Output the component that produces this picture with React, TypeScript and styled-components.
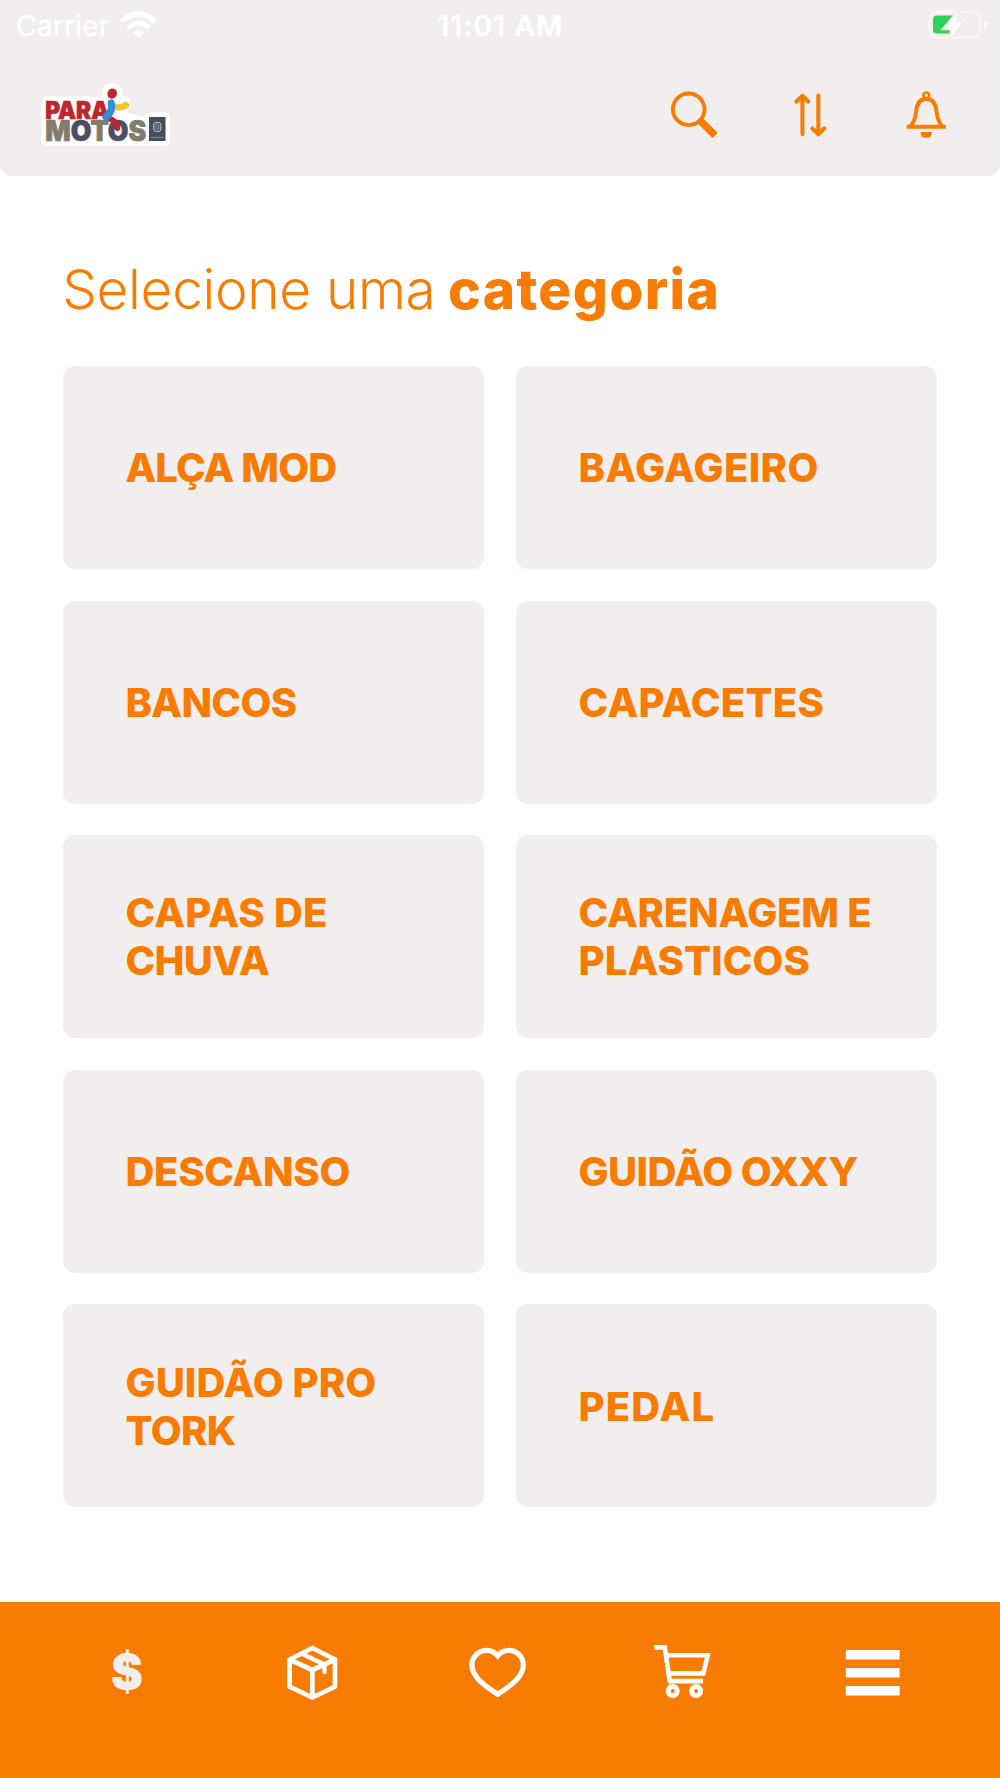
import React from "react";
import styled, { createGlobalStyle } from "styled-components";

const ORANGE = "#f87c02";
const PANEL = "#f2eeee";

const GlobalStyle = createGlobalStyle`
  * { box-sizing: border-box; }
  body { margin: 0; background: #fff; font-family: Inter, Roboto, sans-serif; }
`;

const Screen = styled.div`
  width: 1000px;
  height: 1778px;
  display: flex;
  flex-direction: column;
  background: #fff;
  overflow: hidden;
`;

const Header = styled.header`
  height: 176px;
  flex: none;
  background: ${PANEL};
  border-radius: 0 0 12px 12px;
`;

const StatusBar = styled.div`
  height: 50px;
  padding: 0 13.5px 0 16px;
  display: grid;
  grid-template-columns: 1fr auto 1fr;
  align-items: center;
  color: #fff;
`;

const Carrier = styled.div`
  display: flex;
  align-items: center;
  gap: 11px;
  font-size: 28.5px;
  line-height: 50px;
`;

const StatusText = styled.span`
  padding-top: 2px;
  line-height: 48px;
`;

const Clock = styled.div`
  padding: 2px 2px 0 0;
  font-size: 28.5px;
  font-weight: 600;
  line-height: 48px;
  letter-spacing: 0.95px;
`;

const Battery = styled.div`
  display: flex;
  justify-content: flex-end;
  margin-right: -1.5px;
`;

const NavRow = styled.div`
  height: 74px;
  padding: 0 49px 0 36px;
  margin-top: 26px;
  display: flex;
  justify-content: space-between;
`;

const Actions = styled.div`
  display: flex;
  gap: 66px;
  padding-top: 12px;
`;

const Icon = styled.svg`
  display: block;
  flex: none;
`;

const Main = styled.main`
  height: 1426.4px;
  flex: none;
  padding: 81px 62.7px 0 62.7px;
`;

const Title = styled.h1`
  margin: 0 0 0 -0.5px;
  height: 64px;
  font-size: 55px;
  line-height: 64px;
  font-weight: 300;
  color: ${ORANGE};
  display: flex;
  gap: 12.5px;
  white-space: nowrap;
`;

const TitleWord = styled.span<{ $weight: number; $track: number }>`
  font-weight: ${(p) => p.$weight};
  letter-spacing: ${(p) => p.$track}px;
`;

const Grid = styled.div`
  margin-top: 45px;
  display: grid;
  grid-template-columns: 1fr 1fr;
  grid-auto-rows: 203px;
  gap: 31.6px 31.6px;
`;

const Card = styled.div`
  background: ${PANEL};
  border-radius: 12px;
  padding: 1.5px 0 0 62.8px;
  display: flex;
  flex-direction: column;
  justify-content: center;
`;

const Line = styled.span<{ $track: number }>`
  font-size: 40px;
  line-height: 48px;
  font-weight: 800;
  color: ${ORANGE};
  white-space: nowrap;
  letter-spacing: ${(p) => p.$track}px;
`;

const TabBar = styled.nav`
  height: 175.6px;
  flex: none;
  background: ${ORANGE};
  padding: 39.6px 0 0 97px;
  display: flex;
`;

const Tab = styled.div<{ $width: number }>`
  width: ${(p) => p.$width}px;
  height: 60px;
`;

const Dollar = styled.div`
  width: 60px;
  text-align: center;
  font-size: 48px;
  font-weight: 900;
  line-height: 60px;
  color: ${PANEL};
`;

type Label = [string, number];
const categories: Label[][] = [
  [["ALÇA MOD", -0.9]],
  [["BAGAGEIRO", 0.4]],
  [["BANCOS", -0.7]],
  [["CAPACETES", 0.3]],
  [["CAPAS DE", 0.25], ["CHUVA", -0.7]],
  [["CARENAGEM E", -0.2], ["PLASTICOS", 0.1]],
  [["DESCANSO", -0.3]],
  [["GUIDÃO OXXY", -0.6]],
  [["GUIDÃO PRO", 0.1], ["TORK", -0.6]],
  [["PEDAL", 1.15]],
];

function Logo() {
  return (
    <Icon width="140" height="78" viewBox="36 76 140 78" fontFamily="Inter, sans-serif" fontWeight="900">
      <path
        d="M46 101H102L107 98C105 91 108 88 112 88C118 88 119 94 117 98L126 102L124 109L118 115L145 122L149 117H165V141H46Z"
        fill="#fff" stroke="#fff" strokeWidth="9" strokeLinejoin="round"
      />
      <text x="45.200" y="118.700" fontSize="24.500" textLength="64" lengthAdjust="spacingAndGlyphs" fill="#bd2631" stroke="#bd2631" strokeWidth=".7">PARA</text>
      <text x="45.200" y="140.700" fontSize="28" textLength="101" lengthAdjust="spacingAndGlyphs" fill="#817c6c" stroke="#817c6c" strokeWidth=".7">
        M<tspan fill="#504c66" stroke="#504c66">O</tspan>T<tspan fill="#504c66" stroke="#504c66">O</tspan>S
      </text>
      <g fill="none" strokeLinecap="round">
        <path d="M117 107Q121 108.500 126 105" stroke="#f6c431" strokeWidth="6.500" />
        <path d="M110.500 119Q116 121 117.300 128" stroke="#bd2631" strokeWidth="6" />
        <path d="M111.300 103Q113.200 111 106 117" stroke="#328dd2" strokeWidth="7.200" />
      </g>
      <ellipse cx="112.200" cy="93.600" rx="4.700" ry="5.200" transform="rotate(25 112.200 93.600)" fill="#bd2631" />
      <rect x="149" y="117" width="16.500" height="24" fill="#43505c" />
      <rect x="153.700" y="122.500" width="7.200" height="9" rx="2.500" fill="none" stroke="#c9ced1" strokeWidth="1" />
      <rect x="156" y="124.500" width="2.700" height="5" rx="1" fill="none" stroke="#aab1b5" strokeWidth=".8" />
      <path d="M151 137.500H163.500" stroke="#77828a" strokeWidth="1.300" />
    </Icon>
  );
}

export default function App() {
  return (
    <Screen>
      <GlobalStyle />
      <Header>
        <StatusBar>
          <Carrier>
            <StatusText>Carrier</StatusText>
            <Icon width="38" height="28" viewBox="120 10 38 28" fill="none" stroke="#fff">
              <path d="M121.800 20.300Q138.500 5.500 155.300 20.300" strokeWidth="5" />
              <path d="M128 26.800Q138.500 17.500 149.200 26.800" strokeWidth="4.800" />
              <path d="M138.500 36.700L133.200 31.200Q138.500 26.800 143.900 31.200Z" fill="#fff" stroke="none" />
            </Icon>
          </Carrier>
          <Clock>11:01 AM</Clock>
          <Battery>
            <Icon width="60" height="30" viewBox="928 9.500 60 30">
              <rect x="929.400" y="11.700" width="50.700" height="25.300" rx="7" fill="none" stroke="#f9f7f7" strokeWidth="2" />
              <path d="M984 20Q987 21.500 987 24.500Q987 27.500 984 29Z" fill="#fbf9f9" />
              <path d="M937 15H952.500L943 28H951L949.500 33H937Q933 33 933 29V19Q933 15 937 15Z" fill="#30d158" />
              <path d="M958 12L943.500 28.200H951.300L951 37L962 22H955.800Z" fill="#fff" stroke={PANEL} strokeWidth="3" paintOrder="stroke" />
            </Icon>
          </Battery>
        </StatusBar>
        <NavRow>
          <Logo />
          <Actions>
            <Icon width="50" height="52" viewBox="669 88 50 52" fill={ORANGE}>
              <circle cx="688.700" cy="109.300" r="15.800" fill="none" stroke={ORANGE} strokeWidth="3.900" />
              <path d="M702.900 118L717.700 132.700L712.300 138L697.800 123.500Z" />
            </Icon>
            <Icon width="50" height="52" viewBox="785 88 50 52" fill="none" stroke={ORANGE} strokeWidth="4" strokeLinecap="round" strokeLinejoin="round">
              <path d="M802.400 134.300V96M796.300 101.700L802.400 95.800L808.500 101.700" />
              <path d="M818.300 95.500V134M812.200 128.300L818.300 134.200L824.400 128.300" />
            </Icon>
            <Icon width="50" height="52" viewBox="901 88 50 52" fill="none" stroke={ORANGE}>
              <circle cx="926.300" cy="95.400" r="3" strokeWidth="2.500" />
              <path d="M910.500 126Q914.800 122 916.100 111.500C916.900 103.500 920 98.800 926.300 98.800S935.700 103.500 936.500 111.500Q937.800 122 942.100 126" strokeWidth="3.900" />
              <path d="M906.700 126.700H945.800" strokeWidth="4" />
              <path d="M920.500 132H932Q931.500 137.800 928 137.800H924.500Q921 137.800 920.500 132Z" fill={ORANGE} stroke="none" />
            </Icon>
          </Actions>
        </NavRow>
      </Header>
      <Main>
        <Title>
          <TitleWord $weight={300} $track={-0.35}>Selecione uma</TitleWord>
          <TitleWord $weight={800} $track={1.4}>categoria</TitleWord>
        </Title>
        <Grid>
          {categories.map((lines) => (
            <Card key={lines[0][0]}>
              {lines.map(([text, track]) => (
                <Line key={text} $track={track}>{text}</Line>
              ))}
            </Card>
          ))}
        </Grid>
      </Main>
      <TabBar>
        <Tab $width={185}><Dollar>$</Dollar></Tab>
        <Tab $width={186}>
          <Icon width="60" height="60" viewBox="282 1642 60 60" fill="none" stroke="#fff" strokeWidth="4.700" strokeLinejoin="round" strokeLinecap="round">
            <path d="M312.400 1648L335 1659.500V1686.700L312.400 1697.500L289.600 1686.700V1659.500ZM289.600 1659.500L312.400 1670L335 1659.500M312.400 1670V1697" />
            <path d="M301.500 1653.500L324.500 1664.500V1672" strokeWidth="4.300" />
          </Icon>
        </Tab>
        <Tab $width={184}>
          <Icon width="60" height="60" viewBox="468 1642 60 60" fill="none" stroke="#fff" strokeWidth="5.200">
            <path d="M497.700 1655.700C494.500 1652 491 1650.400 486.700 1650.400C478.500 1650.400 471.900 1656.700 471.900 1665C471.900 1674.500 480 1683 497.700 1694.200C515.400 1683 523.300 1674.500 523.300 1665C523.300 1656.700 516.900 1650.400 508.700 1650.400C504.400 1650.400 500.900 1652 497.700 1655.700Z" />
          </Icon>
        </Tab>
        <Tab $width={190}>
          <Icon width="60" height="60" viewBox="652 1642 60 60" fill="none" stroke="#fff" strokeWidth="4.600">
            <path d="M654.300 1647.400H664.800L669.700 1681.100H703" />
            <path d="M666 1655.300H707.800L703.300 1673.400H669" />
            <circle cx="672.700" cy="1691" r="4.500" strokeWidth="5" />
            <circle cx="696.100" cy="1691" r="4.500" strokeWidth="5" />
          </Icon>
        </Tab>
        <Tab $width={60}>
          <Icon width="60" height="60" viewBox="842 1642 60 60" fill="#fff">
            <path d="M845.800 1650H899.600V1659.600H845.800ZM845.800 1668H899.600V1677.600H845.800ZM845.800 1686H899.600V1695.600H845.800Z" />
          </Icon>
        </Tab>
      </TabBar>
    </Screen>
  );
}
